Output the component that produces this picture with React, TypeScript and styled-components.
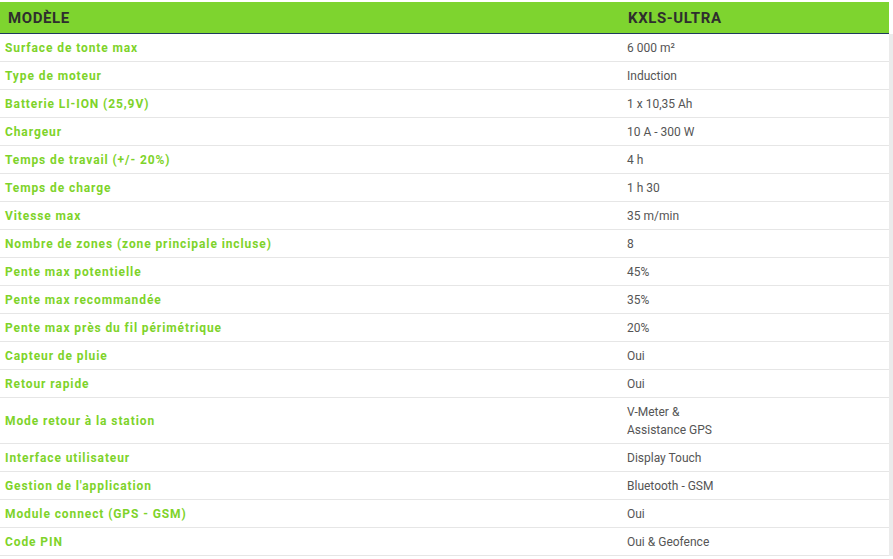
import React from 'react';
import styled, { createGlobalStyle } from "styled-components";

type SpecType = {
    label: string
    value: React.ReactNode
}

const specs: SpecType[] = [
    {label: "Surface de tonte max", value: "6 000 m²"},
    {label: "Type de moteur", value: "Induction"},
    {label: "Batterie LI-ION (25,9V)", value: "1 x 10,35 Ah"},
    {label: "Chargeur", value: "10 A - 300 W"},
    {label: "Temps de travail (+/- 20%)", value: "4 h"},
    {label: "Temps de charge", value: "1 h 30"},
    {label: "Vitesse max", value: "35 m/min"},
    {label: "Nombre de zones (zone principale incluse)", value: "8"},
    {label: "Pente max potentielle", value: "45%"},
    {label: "Pente max recommandée", value: "35%"},
    {label: "Pente max près du fil périmétrique", value: "20%"},
    {label: "Capteur de pluie", value: "Oui"},
    {label: "Retour rapide", value: "Oui"},
    {label: "Mode retour à la station", value: <>V-Meter &amp;<br/>Assistance GPS</>},
    {label: "Interface utilisateur", value: "Display Touch"},
    {label: "Gestion de l'application", value: "Bluetooth - GSM"},
    {label: "Module connect (GPS - GSM)", value: "Oui"},
    {label: "Code PIN", value: "Oui & Geofence"},
]

export default function App() {
    return (
        <>
            <GlobalStyle/>
            <Page>
                <Head>
                    <HeadCell>Modèle</HeadCell>
                    <HeadCell>KXLS-ULTRA</HeadCell>
                </Head>
                <Body>
                    {specs.map((s) => (
                        <Row key={s.label}>
                            <Label>{s.label}</Label>
                            <Value>{s.value}</Value>
                        </Row>
                    ))}
                </Body>
            </Page>
        </>
    );
}

const GlobalStyle = createGlobalStyle`
  body {
    margin: 0;
    background: #fff;
    font-family: Roboto, "Liberation Sans", sans-serif;
  }
`
const Page = styled.div`
  padding-top: 2px;
  width: 893px;
`
const Head = styled.div`
  display: grid;
  grid-template-columns: 620px 1fr;
  width: 889px;
  height: 31px;
  align-items: center;
  background-color: #7ed42f;
  border-bottom: 1px solid #1e3a5c;
`
const HeadCell = styled.div`
  padding-left: 8px;
  font-size: 15px;
  font-weight: 700;
  color: #2e2e2e;
  text-transform: uppercase;
  letter-spacing: 0.6px;
`
const Body = styled.div`
  width: 889px;
  border-right: 4px solid #ebebeb;
`
const Row = styled.div`
  display: grid;
  grid-template-columns: 622px 1fr;
  align-items: center;
  border-bottom: 1px solid #e6e6e6;
  padding: 5px 0 4px;
  line-height: 18px;
  font-size: 12px;
`
const Label = styled.div`
  padding-left: 5px;
  color: #7ed32a;
  font-weight: 700;
  letter-spacing: 0.9px;
`
const Value = styled.div`
  padding-left: 5px;
  color: #555;
`
